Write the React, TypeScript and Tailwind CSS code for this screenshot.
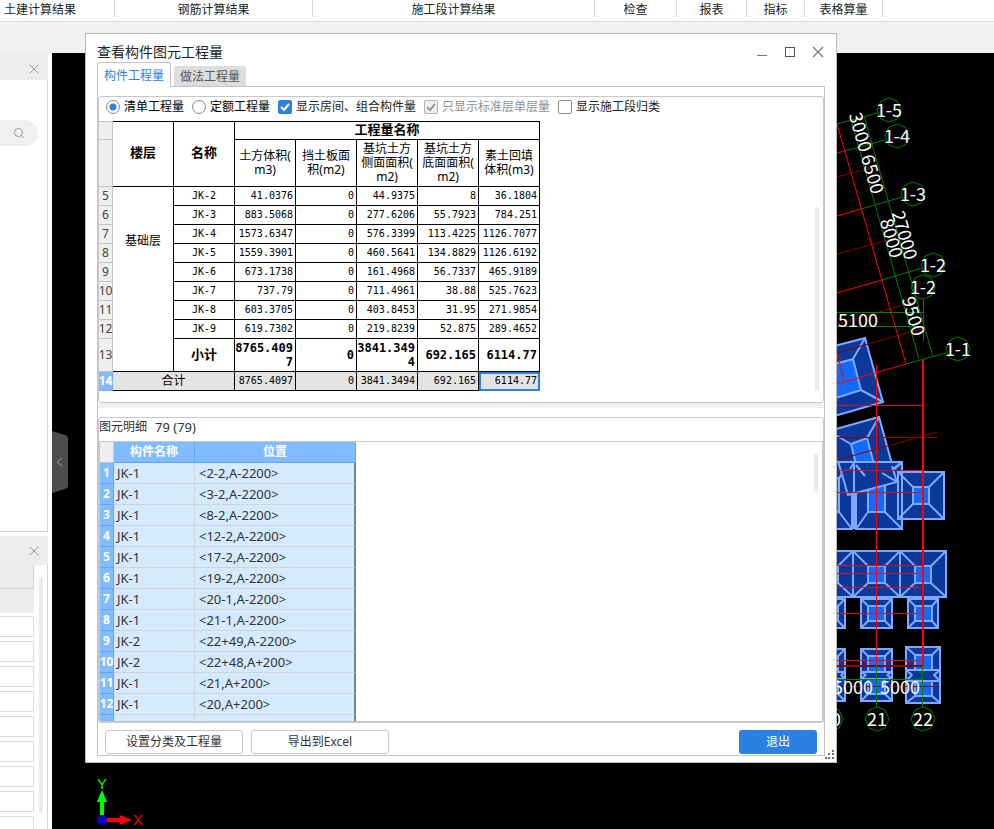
import { useState } from 'react';
import { Search } from 'lucide-react';

const menus = [
    { label: '土建计算结果', width: 'w-[115px] pl-1 text-left' },
    { label: '钢筋计算结果', width: 'w-[198px] text-center' },
    { label: '施工段计算结果', width: 'w-[282px] text-center' },
    { label: '检查', width: 'w-[82px] text-center' },
    { label: '报表', width: 'w-[70px] text-center' },
    { label: '指标', width: 'w-[58px] text-center' },
    { label: '表格算量', width: 'w-[78px] text-center' },
];

const quantityHeads = [
    '土方体积(\nm3)',
    '挡土板面\n积(m2)',
    '基坑土方\n侧面面积(\nm2)',
    '基坑土方\n底面面积(\nm2)',
    '素土回填\n体积(m3)',
];

const quantityRows = [
    { no: 5, name: 'JK-2', values: ['41.0376', '0', '44.9375', '8', '36.1804'] },
    { no: 6, name: 'JK-3', values: ['883.5068', '0', '277.6206', '55.7923', '784.251'] },
    { no: 7, name: 'JK-4', values: ['1573.6347', '0', '576.3399', '113.4225', '1126.7077'] },
    { no: 8, name: 'JK-5', values: ['1559.3901', '0', '460.5641', '134.8829', '1126.6192'] },
    { no: 9, name: 'JK-6', values: ['673.1738', '0', '161.4968', '56.7337', '465.9189'] },
    { no: 10, name: 'JK-7', values: ['737.79', '0', '711.4961', '38.88', '525.7623'] },
    { no: 11, name: 'JK-8', values: ['603.3705', '0', '403.8453', '31.95', '271.9854'] },
    { no: 12, name: 'JK-9', values: ['619.7302', '0', '219.8239', '52.875', '289.4652'] },
];

const totals = ['8765.4097', '0', '3841.3494', '692.165', '6114.77'];

const details = [
    ['JK-1', '<2-2,A-2200>'],
    ['JK-1', '<3-2,A-2200>'],
    ['JK-1', '<8-2,A-2200>'],
    ['JK-1', '<12-2,A-2200>'],
    ['JK-1', '<17-2,A-2200>'],
    ['JK-1', '<19-2,A-2200>'],
    ['JK-1', '<20-1,A-2200>'],
    ['JK-1', '<21-1,A-2200>'],
    ['JK-2', '<22+49,A-2200>'],
    ['JK-2', '<22+48,A+200>'],
    ['JK-1', '<21,A+200>'],
    ['JK-1', '<20,A+200>'],
    ['', ''],
];

const CloseIcon = ({ size = 12 }: { size?: number }) => (
    <svg width={size} height={size} viewBox="0 0 12 12" fill="none" stroke="currentColor" strokeWidth="1.200">
        <path d="M1 1L11 11M11 1L1 11" />
    </svg>
);

const MenuBar = () => (
    <nav className="flex h-[22px] shrink-0 border-b border-[#d9d9d9] bg-white">
        {menus.map((m) => (
            <button key={m.label} type="button" className={`h-[17px] border-r border-[#d9d9d9] leading-5 text-[#222] ${m.width}`}>
                {m.label}
            </button>
        ))}
    </nav>
);

const SidePanels = () => (
    <aside className="flex w-[52px] shrink-0 flex-col gap-1 overflow-hidden bg-white pr-1">
        <section className="flex-1 border-b border-[#d4d4d6]">
            <header className="flex h-[27px] items-center justify-end bg-[#ededef] pt-1 pr-[9px] text-[#999]">
                <button type="button" aria-label="关闭"><CloseIcon size={10} /></button>
            </header>
            <div className="h-[451px] border-r border-[#d4d4d6] pt-10 pr-[9px]">
                <button type="button" aria-label="搜索" className="flex h-[26px] w-full items-center justify-center rounded-r-full bg-[#f0f0f0] text-[#999]">
                    <Search size={12} />
                </button>
            </div>
        </section>
        <section className="h-[293px]">
            <header className="flex h-[29px] items-center justify-end bg-[#ededef] pr-[9px] text-[#999]">
                <button type="button" aria-label="关闭"><CloseIcon size={10} /></button>
            </header>
            <div className="flex h-[264px] items-start justify-between overflow-hidden border-r border-[#d4d4d6] pr-1">
                <div className="flex w-[34px] flex-col gap-1">
                    <div className="-mb-1 h-6 border-r border-b border-[#d0d0d0] bg-[#ececec]" />
                    <div className="-mb-px h-6 bg-[#ececec]" />
                    {[1, 2, 3, 4, 5, 6, 7, 8, 9].map((n) => (
                        <input key={n} type="text" aria-label={`属性 ${n}`} className="h-[21px] w-full border border-l-0 border-[#dcdcdc]" />
                    ))}
                </div>
                <div className="mt-3 h-[236px] w-1 rounded-full bg-[#ebebeb]" />
            </div>
        </section>
    </aside>
);

const axisBubbles = [
    { x: 889, y: 110, text: '1-5' },
    { x: 897, y: 136, text: '1-4' },
    { x: 913, y: 194, text: '1-3' },
    { x: 933, y: 265, text: '1-2' },
    { x: 923, y: 287, text: '1-2' },
    { x: 958, y: 349, text: '1-1' },
    { x: 831, y: 719, text: '20' },
    { x: 877, y: 719, text: '21' },
    { x: 923, y: 719, text: '22' },
];

const slantedDims = [
    { x: 861, y: 132, text: '3000' },
    { x: 873, y: 174, text: '6500' },
    { x: 905, y: 235, text: '27000' },
    { x: 892, y: 238, text: '8000' },
    { x: 914, y: 316, text: '9500' },
];

// outer box then inner box of a footing seen from above
const Footing = ({ o, i }: { o: number[]; i: number[] }) => (
    <g stroke="#7fa8ff" strokeWidth="2">
        <rect x={o[0]} y={o[1]} width={o[2] - o[0]} height={o[3] - o[1]} fill="#0a389b" />
        <path d={`M${o[0]} ${o[1]}L${i[0]} ${i[1]}M${o[2]} ${o[1]}L${i[2]} ${i[1]}M${o[0]} ${o[3]}L${i[0]} ${i[3]}M${o[2]} ${o[3]}L${i[2]} ${i[3]}`} />
        <rect x={i[0]} y={i[1]} width={i[2] - i[0]} height={i[3] - i[1]} fill="#146aff" />
    </g>
);

const Drawing = () => (
    <svg viewBox="52 53 942 776" preserveAspectRatio="xMinYMin slice" className="h-full w-full">
        {/* tilted footings */}
        <g stroke="#7fa8ff" strokeWidth="2">
            <path d="M800 355L865 338L883 402L800 426Z" fill="#0a389b" />
            <path d="M820 368L853 359L861 390L820 403Z" fill="#146aff" />
            <path d="M853 359L865 338M861 390L883 402" />
            <path d="M800 439L879 417L897 482L848 495L830 440Z" fill="#0a389b" />
            <path d="M851 444L867 438L875 468L858 472Z" fill="#146aff" />
            <path d="M851 444L830 432M867 438L879 417" />
        </g>
        {/* straight footings */}
        <Footing o={[808, 462, 852, 529]} i={[822, 478, 839, 512]} />
        <Footing o={[856, 462, 902, 529]} i={[868, 478, 885, 512]} />
        <g stroke="#7fa8ff" strokeWidth="2">
            <path d="M838 462H894L897 482L848 495Z" fill="#0a389b" stroke="none" />
            <path d="M838 461L848 495L897 482L882 473M892 466L897 482M850 469L854 463V529M856 465L865 476M892 470L902 462M837 462H902" fill="none" />
        </g>
        <Footing o={[898, 472, 944, 519]} i={[913, 487, 929, 504]} />
        <path d="M902 472V519" stroke="#7fa8ff" strokeWidth="2" />
        <Footing o={[806, 551, 853, 597]} i={[821, 566, 838, 583]} />
        <Footing o={[853, 551, 900, 597]} i={[868, 566, 885, 583]} />
        <Footing o={[900, 551, 946, 597]} i={[915, 566, 931, 583]} />
        <Footing o={[814, 599, 845, 628]} i={[822, 606, 838, 621]} />
        <Footing o={[861, 599, 892, 628]} i={[868, 606, 885, 621]} />
        <Footing o={[908, 599, 938, 628]} i={[915, 606, 932, 621]} />
        <Footing o={[814, 649, 845, 701]} i={[822, 656, 838, 694]} />
        <Footing o={[861, 649, 892, 701]} i={[868, 656, 885, 694]} />
        <Footing o={[906, 647, 940, 703]} i={[915, 655, 932, 696]} />
        <g stroke="#7fa8ff" strokeWidth="2" strokeLinejoin="bevel" fill="#0a389b">
            <path d="M828 672H845L841 675L845 679H828Z" />
            <path d="M861 672H892L887 675L892 679H861L866 675Z" />
            <path d="M906 670H940L934 675L940 681H906L912 675Z" />
        </g>
        {/* axis grid */}
        <g stroke="#8a0000">
            <path d="M837 177L871 168M837 254L896 238M837 324L917 301M837 353L924 328M837 460L938 432M837 437.500H938M837 686.500H937" />
            <path d="M837 666H923" strokeWidth="2" />
        </g>
        <g stroke="#d80c1c">
            <path d="M837 405.500H923M837 470.500H923M837 492.500H923M837 565.500H923M837 573.500H923M837 587.500H923M837 613.500H923" />
        </g>
        <g stroke="#f00">
            <path d="M837 124L906 364M837 153L845 151M837 216L861 209M837 293L882 280M837 384L906 364M837 353L844 381M876.500 365V664M837 660.500H923" />
            <path d="M923 360V666" strokeWidth="2" />
        </g>
        <g stroke="#008000" fill="none">
            <path d="M877 113L837 124M885 140L845 151M902 197L861 209M922 268L882 280M946 353L906 364M851 120L919 359M864 116L933 357" />
            <path d="M923.500 299V341M837 312.500H923M837 326.500H923M837 679.500H923M876.500 664V707M922.500 666V707" />
            {axisBubbles.map((b, n) => (
                <polygon key={n} points="0,-12 8,-9 12,0 8,9 0,12 -8,9 -12,0 -8,-9" transform={`translate(${b.x} ${b.y})`} />
            ))}
        </g>
        <g fill="#fff" fontSize="18" fontFamily="'Noto Sans CJK SC', sans-serif" textAnchor="middle">
            {axisBubbles.map((b, n) => (
                <text key={n} x={b.x} y={b.y + 7}>{b.text}</text>
            ))}
            {slantedDims.map((d) => (
                <text key={d.text} transform={`translate(${d.x} ${d.y}) rotate(74)`} y="7">{d.text}</text>
            ))}
            <text x="853" y="327">15100</text>
            <text x="853" y="694">5000</text>
            <text x="900" y="694">5000</text>
        </g>
        {/* coordinate mark */}
        <path d="M102 815V800" stroke="#0f0" strokeWidth="4" />
        <path d="M102 790L107 802H97Z" fill="#0f0" />
        <path d="M106 820H120" stroke="#f00" strokeWidth="4" />
        <path d="M132 820L120 825V815Z" fill="#f00" />
        <circle cx="102" cy="820" r="5" fill="#0000c8" />
        <g fontSize="15" fontFamily="'Liberation Sans', sans-serif" textAnchor="middle">
            <text x="102" y="789" fill="#0f0">Y</text>
            <text x="138" y="825" fill="#f00">X</text>
        </g>
    </svg>
);

const Radio = ({ label, checked, onChange }: { label: string; checked: boolean; onChange: () => void }) => (
    <label className="flex items-center gap-1 text-black">
        <input
            type="radio"
            name="mode"
            checked={checked}
            onChange={onChange}
            className="size-[14px] appearance-none rounded-full border border-[#888] bg-white checked:bg-[radial-gradient(circle,#2b80e3_3px,#fff_4px)]"
        />
        {label}
    </label>
);

const Check = ({ label, on = false, disabled = false }: { label: string; on?: boolean; disabled?: boolean }) => (
    <label className={`flex items-center gap-1 ${disabled ? 'text-[#909090]' : 'text-[#222]'}`}>
        <span className="grid size-[14px]">
            <input
                type="checkbox"
                defaultChecked={on}
                disabled={disabled}
                className="peer size-[14px] appearance-none rounded-[2px] border border-[#8c8c8c] bg-white [grid-area:1/1] checked:border-[#2b80e3] checked:bg-[#2b80e3] disabled:border-[#b4b4b4] disabled:bg-[#f0f0f0]"
            />
            <svg viewBox="0 0 14 14" fill="none" stroke="currentColor" strokeWidth="2" className="pointer-events-none invisible size-[14px] text-white [grid-area:1/1] peer-checked:visible peer-disabled:text-[#999]">
                <path d="M3 7L6 10L11 4" />
            </svg>
        </span>
        {label}
    </label>
);

const numCell = "border-r border-b border-[#c4c4c4] bg-[#efefef] text-center text-[12px] font-normal text-[#444]";
const cell = "border-r border-b border-black";
const valueCell = "border-r border-b border-black pr-[2px] text-right font-['DejaVu_Sans_Mono','Noto_Sans_CJK_SC',monospace]";

const QuantityTable = () => (
    <table className="w-[441px] table-fixed border-separate border-spacing-0 leading-[14px] text-black">
        <colgroup>
            <col className="w-[14px]" />
            <col span={7} className="w-[61px]" />
        </colgroup>
        <thead>
            <tr className="h-[19px] text-[13px]">
                <th className={`${numCell} border-t`} />
                <th rowSpan={2} className={`${cell} border-t pb-1`}>楼层</th>
                <th rowSpan={2} className={`${cell} border-t pb-1`}>名称</th>
                <th colSpan={5} className={`${cell} border-t pb-[3px]`}>工程量名称</th>
            </tr>
            <tr className="h-[47px]">
                <th className={numCell} />
                {quantityHeads.map((h) => (
                    <th key={h} className={`${cell} font-normal whitespace-pre`}>{h}</th>
                ))}
            </tr>
        </thead>
        <tbody>
            {quantityRows.map((row, index) => (
                <tr key={row.no} className="h-[19px]">
                    <th className={numCell}><span className="flex justify-center">{row.no}</span></th>
                    {index === 0 && <td rowSpan={9} className={`${cell} pb-19 text-center`}>基础层</td>}
                    <td className={`${cell} text-center font-['DejaVu_Sans_Mono',monospace] text-[10px]`}>{row.name}</td>
                    {row.values.map((v, n) => <td key={n} className={`${valueCell} text-[10px]`}>{v}</td>)}
                </tr>
            ))}
            <tr className="h-[33px] font-bold">
                <th className={numCell}><span className="flex justify-center">13</span></th>
                <td className={`${cell} pb-[2px] text-center text-[13px]`}>小计</td>
                {totals.map((v, n) => <td key={n} className={`${valueCell} break-all`}>{v}</td>)}
            </tr>
            <tr className="h-[19px] bg-[#e3e3e3]">
                <th className="border-r border-b border-[#6caef5] bg-[#80bcff] text-[12px] text-white"><span className="flex justify-center">14</span></th>
                <td colSpan={2} className={`${cell} text-center`}>合计</td>
                {totals.map((v, n) => (
                    <td key={n} className={`${valueCell} text-[10px] ${n === 4 ? 'outline-2 -outline-offset-2 outline-[#2b80e3]' : ''}`}>{v}</td>
                ))}
            </tr>
        </tbody>
    </table>
);

const DetailTable = () => (
    <table className="w-[256px] table-fixed border-separate border-spacing-0 text-[13px] leading-5 text-[#333]">
        <colgroup>
            <col className="w-[14px]" />
            <col className="w-[81px]" />
            <col className="w-[161px]" />
        </colgroup>
        <thead>
            <tr className="h-[21px] text-[12px] text-white">
                <td className="border-r border-b border-[#c4c4c4] bg-[#efefef]" />
                <th className="border-r border-b border-[#62a5ea] bg-[#80bcff]">构件名称</th>
                <th className="border-r border-b border-[#62a5ea] bg-[#80bcff]">位置</th>
            </tr>
        </thead>
        <tbody>
            {details.map(([name, place], index) => (
                <tr key={index} className="h-[21px]">
                    <th className="border-r border-b border-[#62a5ea] bg-[#80bcff] text-[12px] text-white">
                        <span className="flex justify-center">{name && index + 1}</span>
                    </th>
                    <td className="border-r border-b border-[#d3d3d6] bg-[#d5e9ff] pl-[3px]">{name}</td>
                    <td className="border-r-2 border-b border-r-[#808080] border-b-[#d3d3d6] bg-[#d5e9ff] pl-1">{place}</td>
                </tr>
            ))}
        </tbody>
    </table>
);

const QuantityDialog = () => {
    const [mode, setMode] = useState('list');
    const plainBtn = "h-6 w-[138px] rounded-[3px] border border-[#c8c8c8] bg-white text-[#333]";

    return (
        <div role="dialog" aria-label="查看构件图元工程量" className="absolute top-[33px] right-[157px] bottom-[66px] left-[85px] flex flex-col border border-[#b9b9bd] bg-white">
            <header className="flex h-7 shrink-0 justify-between pt-2 pr-1 pl-[11px]">
                <h1 className="text-[14px] leading-5 text-[#222]">查看构件图元工程量</h1>
                <div className="flex h-5 text-[#777]">
                    <button type="button" aria-label="最小化" className="flex w-7 items-center justify-center">
                        <svg width="12" height="12" fill="none" stroke="currentColor"><path d="M1 9.500H11" /></svg>
                    </button>
                    <button type="button" aria-label="最大化" className="flex w-7 items-center justify-center">
                        <svg width="12" height="12" fill="none" stroke="#555"><rect x="1.500" y="1.500" width="9" height="9" /></svg>
                    </button>
                    <button type="button" aria-label="关闭" className="flex w-7 items-center justify-center"><CloseIcon /></button>
                </div>
            </header>
            <div className="flex min-h-0 flex-1 flex-col px-[11px] pb-[6px]">
                <div role="tablist" className="flex h-6 shrink-0 items-end gap-[3px]">
                    <button type="button" role="tab" aria-selected="true" className="relative -mb-px h-[25px] w-[74px] rounded-t-[3px] border border-b-0 border-[#c3c3c9] bg-white pt-[2px] text-[#2b80e3]">构件工程量</button>
                    <button type="button" role="tab" aria-selected="false" className="h-5 w-[72px] rounded-t-[3px] bg-[#dddddd] pt-[2px] text-[#555]">做法工程量</button>
                </div>
                <div className="flex min-h-0 flex-1 flex-col border border-[#c3c3c9] pt-[9px]">
                    <section className="shrink-0 rounded-[3px] border border-[#c8c8c8]">
                        <div className="flex h-6 items-center gap-2 pb-1 pl-[7px]">
                            <Radio label="清单工程量" checked={mode === 'list'} onChange={() => setMode('list')} />
                            <Radio label="定额工程量" checked={mode === 'quota'} onChange={() => setMode('quota')} />
                            <Check label="显示房间、组合构件量" on />
                            <Check label="只显示标准层单层量" on disabled />
                            <Check label="显示施工段归类" />
                        </div>
                        <div className="flex items-end justify-between pr-1 pb-[11px]">
                            <QuantityTable />
                            <div className="h-[184px] w-1 rounded-full bg-[#ebebeb]" />
                        </div>
                    </section>
                    <div className="h-[5px] shrink-0 bg-[#f0f0f0]" />
                    <section className="mt-[9px] flex min-h-0 flex-1 flex-col rounded-[3px] border border-[#c8c8c8]">
                        <h2 className="flex h-[23px] shrink-0 gap-2 leading-[18px] text-[#333]">
                            图元明细 <span className="text-[13px]">79 (79)</span>
                        </h2>
                        <div className="flex min-h-0 flex-1 items-start justify-between overflow-hidden border border-[#c8c8c8] pr-1">
                            <DetailTable />
                            <div className="mt-3 h-[38px] w-1 rounded-full bg-[#ebebeb]" />
                        </div>
                    </section>
                    <footer className="flex shrink-0 gap-2 px-[7px] pt-[7px] pb-px">
                        <button type="button" className={plainBtn}>设置分类及工程量</button>
                        <button type="button" className={plainBtn}>导出到Excel</button>
                        <button type="button" className="ml-auto h-6 w-[78px] rounded-[3px] bg-[#2b80e3] text-white">退出</button>
                    </footer>
                </div>
            </div>
            <svg width="9" height="9" viewBox="0 0 9 9" fill="#6b6b75" className="absolute right-[2px] bottom-[3px]">
                <path d="M7 0h2v2h-2zM3 3h2v2h-2zM7 3h2v2h-2zM0 7h2v2h-2zM3 7h2v2h-2zM7 7h2v2h-2z" />
            </svg>
        </div>
    );
};

export default function App() {
    return (
        <div className="relative flex h-screen flex-col overflow-hidden bg-[#f1f1f1] font-['Noto_Sans','Noto_Sans_CJK_SC',sans-serif] text-[12px]">
            <MenuBar />
            <main className="mt-[31px] flex min-h-0 flex-1">
                <SidePanels />
                <div className="relative min-w-0 flex-1 overflow-hidden bg-black">
                    <Drawing />
                    <button type="button" aria-label="收起" className="absolute top-[378px] left-0">
                        <svg width="16" height="62" viewBox="0 0 16 62" fill="none">
                            <path d="M0 0L13 4Q16 5 16 8V54Q16 57 13 58L0 62Z" fill="#4d4d4d" />
                            <path d="M10 27L5 31L10 35" stroke="#999" />
                        </svg>
                    </button>
                </div>
            </main>
            <QuantityDialog />
        </div>
    );
}
